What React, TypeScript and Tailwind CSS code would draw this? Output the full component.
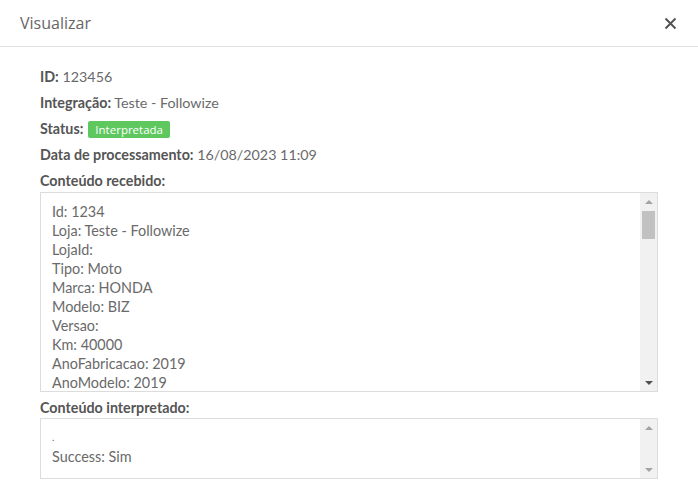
import React from "react";

const received = [
  "Id: 1234",
  "Loja: Teste - Followize",
  "LojaId:",
  "Tipo: Moto",
  "Marca: HONDA",
  "Modelo: BIZ",
  "Versao:",
  "Km: 40000",
  "AnoFabricacao: 2019",
  "AnoModelo: 2019",
];

function Scrollbar({ thumb }: { thumb: boolean }) {
  return (
    <div className="w-[17px] bg-[#f1f1f1] flex flex-col items-center justify-between shrink-0">
      <div className="flex flex-col items-center w-full">
        <div className="h-[17px] flex items-center justify-center">
          <div className="w-0 h-0 border-l-[4px] border-r-[4px] border-b-[4px] border-l-transparent border-r-transparent border-b-[#a3a3a3]" />
        </div>
        {thumb && <div className="w-[13px] h-[28px] bg-[#c1c1c1] mt-[1px]" />}
      </div>
      <div className="h-[17px] flex items-center justify-center">
        <div className={"w-0 h-0 border-l-[4px] border-r-[4px] border-t-[4px] border-l-transparent border-r-transparent " + (thumb ? "border-t-[#505050]" : "border-t-[#a3a3a3]")} />
      </div>
    </div>
  );
}

export default function App() {
  return (
    <div className="w-[698px] h-[495px] bg-white overflow-hidden text-[#6a6a6a]" style={{ fontFamily: "Lato, 'Open Sans', sans-serif" }}>
      <div className="h-[47px] border-b border-[#e0e0e0] flex items-center justify-between pl-[20px] pr-[20px]">
        <span className="text-[16px] text-[#666] mt-[-1px]" style={{ fontFamily: "'Open Sans', sans-serif" }}>Visualizar</span>
        <svg width="13" height="13" viewBox="0 0 13 13" className="mr-[1px]">
          <path d="M1.5 1.5 L11.5 11.5 M11.5 1.5 L1.5 11.5" stroke="#555" strokeWidth="2" strokeLinecap="butt" />
        </svg>
      </div>
      <div className="px-[40px] pt-[20px] text-[14.3px]">
        <div className="h-[26px] leading-[20px]"><b className="text-[#555]">ID:</b> 123456</div>
        <div className="h-[26px] leading-[20px]"><b className="text-[#555]">Integração:</b> Teste - Followize</div>
        <div className="h-[26px] leading-[20px] flex items-center gap-[5px] pb-[6px]">
          <b className="text-[#555]">Status:</b>
          <span className="bg-[#5ec75e] text-white text-[11.5px] leading-[17px] px-[7px] rounded-[2px] h-[17px] inline-block" style={{ fontFamily: "'Open Sans', sans-serif" }}>Interpretada</span>
        </div>
        <div className="h-[26px] leading-[20px]"><b className="text-[#555]">Data de processamento:</b> 16/08/2023 11:09</div>
        <div className="h-[20px] leading-[20px]"><b className="text-[#555]">Conteúdo recebido:</b></div>
        <div className="mt-[1px] h-[200px] border border-[#dcdcdc] flex">
          <div className="flex-1 overflow-hidden pl-[11px] pt-[9px] leading-[19px] text-[14.4px]">
            {received.map((l) => (
              <div key={l}>{l}</div>
            ))}
          </div>
          <Scrollbar thumb />
        </div>
        <div className="h-[26px] leading-[20px] pt-[6px]"><b className="text-[#555]">Conteúdo interpretado:</b></div>
        <div className="h-[61px] border border-[#dcdcdc] flex">
          <div className="flex-1 overflow-hidden pl-[11px] pt-[9px] leading-[19px] text-[14.4px]">
            <div className="text-[10px]">.</div>
            <div>Success: Sim</div>
          </div>
          <Scrollbar thumb={false} />
        </div>
      </div>
    </div>
  );
}
